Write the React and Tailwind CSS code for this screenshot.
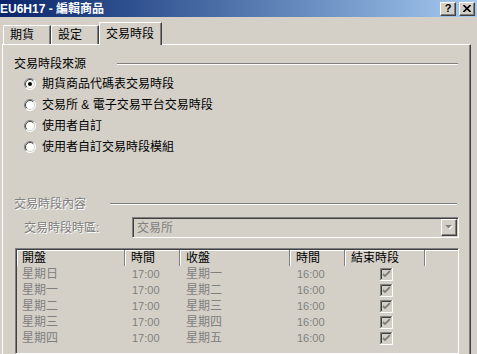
import React from 'react';

const raised =
  'border border-t-white border-l-white border-r-[#404040] border-b-[#404040] shadow-[inset_-1px_-1px_0_#808080]';
const sunken =
  'border border-t-[#808080] border-l-[#808080] border-r-white border-b-white shadow-[inset_1px_1px_0_#404040,inset_-1px_-1px_0_#d4d0c8]';
const disabledText = 'text-[#808080] [text-shadow:1px_1px_0_#ffffff]';

const sources = [
  '期貨商品代碼表交易時段',
  '交易所 & 電子交易平台交易時段',
  '使用者自訂',
  '使用者自訂交易時段模組',
];

const sessions = [
  { open: '星期日', openTime: '17:00', close: '星期一', closeTime: '16:00' },
  { open: '星期一', openTime: '17:00', close: '星期二', closeTime: '16:00' },
  { open: '星期二', openTime: '17:00', close: '星期三', closeTime: '16:00' },
  { open: '星期三', openTime: '17:00', close: '星期四', closeTime: '16:00' },
  { open: '星期四', openTime: '17:00', close: '星期五', closeTime: '16:00' },
];

const Radio = ({ checked }) => (
  <svg width="12" height="12" viewBox="0 0 12 12" className="shrink-0">
    <circle cx="6" cy="6" r="5.5" fill="#ffffff" />
    <path d="M2.1 9.9 A5.5 5.5 0 0 1 9.9 2.1" stroke="#808080" fill="none" />
    <path d="M2.1 9.9 A5.5 5.5 0 0 0 9.9 2.1" stroke="#ffffff" fill="none" />
    <path d="M2.8 9.2 A4.5 4.5 0 0 1 9.2 2.8" stroke="#404040" fill="none" />
    <path d="M2.8 9.2 A4.5 4.5 0 0 0 9.2 2.8" stroke="#d4d0c8" fill="none" />
    {checked && <circle cx="6" cy="6" r="2" fill="#000000" />}
  </svg>
);

const Checkbox = () => (
  <svg width="13" height="13" viewBox="0 0 13 13">
    <rect x="0" y="0" width="13" height="13" fill="#d4d0c8" />
    <path d="M0.5 12 V0.5 H12" stroke="#808080" fill="none" />
    <path d="M1.5 11 V1.5 H11" stroke="#404040" fill="none" />
    <path d="M0 12.5 H12.5 V0" stroke="#ffffff" fill="none" />
    <path d="M3 6 L5 8 L10 3" stroke="#808080" strokeWidth="1.8" fill="none" />
  </svg>
);

const GroupHeader = ({ label, labelWidth, disabled, rightGap }) => (
  <div className={`flex items-center h-[12px] pl-[11px] ${rightGap}`}>
    <span className={`shrink-0 ${labelWidth} ${disabled ? disabledText : ''}`}>{label}</span>
    <div className="flex-1 h-[2px] border-t border-t-[#808080] border-b border-b-white" />
  </div>
);

const TitleBar = () => (
  <div className="h-[17px] shrink-0 flex items-center bg-gradient-to-r from-[#0a246a] to-[#a6caf0]">
    <span className="text-white font-bold text-[12px] whitespace-nowrap">
      EU6H17 - 編輯商品
    </span>
    <div className="ml-auto flex gap-[3px] mr-[2px]">
      <div className={`w-[16px] h-[14px] bg-[#d4d0c8] flex items-center justify-center ${raised}`}>
        <span className="font-bold text-[11px] leading-[11px]">?</span>
      </div>
      <div className={`w-[16px] h-[14px] bg-[#d4d0c8] flex items-center justify-center ${raised}`}>
        <svg width="8" height="7" viewBox="0 0 8 7">
          <path d="M0.5 0 L7.5 7 M7.5 0 L0.5 7" stroke="#000" strokeWidth="1.6" />
        </svg>
      </div>
    </div>
  </div>
);

const Tabs = () => (
  <div className="flex items-end h-[22px] mt-[5px] pl-[3px] shrink-0">
    <div className="w-[48px] h-[19px] flex items-center pl-[6px] rounded-tl-[2px] border-t border-l border-t-white border-l-white border-r border-r-[#404040] shadow-[inset_-1px_0_0_#808080]">
      期貨
    </div>
    <div className="w-[48px] h-[19px] flex items-center pl-[6px] rounded-tl-[2px] border-t border-l border-t-white border-l-white border-r border-r-[#404040] shadow-[inset_-1px_0_0_#808080]">
      設定
    </div>
    <div className="relative z-10 -mb-px w-[63px] h-[23px] flex items-center pl-[6px] pb-[1px] bg-[#d4d0c8] rounded-tl-[2px] border-t border-l border-t-white border-l-white border-r border-r-[#404040] shadow-[inset_-1px_0_0_#808080]">
      交易時段
    </div>
  </div>
);

const SessionTable = () => (
  <div className={`flex-1 mt-[10px] ml-[12px] mr-[11px] flex flex-col ${sunken}`}>
    <div className="flex h-[16px] mt-[1px] ml-[1px] shrink-0">
      <div className="w-[108px] pl-[5px] flex items-center border-r border-r-[#808080] shadow-[inset_1px_1px_0_#ffffff]">開盤</div>
      <div className="w-[55px] pl-[6px] flex items-center border-r border-r-[#808080] shadow-[inset_1px_1px_0_#ffffff]">時間</div>
      <div className="w-[110px] pl-[6px] flex items-center border-r border-r-[#808080] shadow-[inset_1px_1px_0_#ffffff]">收盤</div>
      <div className="w-[55px] pl-[6px] flex items-center border-r border-r-[#808080] shadow-[inset_1px_1px_0_#ffffff]">時間</div>
      <div className="w-[80px] pl-[6px] flex items-center border-r border-r-[#808080] shadow-[inset_1px_1px_0_#ffffff]">結束時段</div>
      <div className="flex-1 shadow-[inset_1px_1px_0_#ffffff]" />
    </div>
    {sessions.map((s) => (
      <div key={s.open} className="flex h-[16px] ml-[1px] items-center text-[#808080] shrink-0">
        <div className="w-[108px] pl-[5px]">{s.open}</div>
        <div className="w-[55px] pl-[7px] text-[11px]">{s.openTime}</div>
        <div className="w-[110px] pl-[6px]">{s.close}</div>
        <div className="w-[55px] pl-[7px] text-[11px]">{s.closeTime}</div>
        <div className="w-[80px] flex justify-center pl-[2px]">
          <Checkbox />
        </div>
      </div>
    ))}
  </div>
);

export default function App() {
  return (
    <div className="w-[477px] h-[354px] overflow-hidden bg-[#d4d0c8] flex flex-col font-['Liberation_Sans','Noto_Sans_CJK_TC',sans-serif] text-[12px] leading-[12px] text-black">
      <TitleBar />
      <Tabs />
      <div className="flex-1 ml-[2px] w-[469px] flex flex-col border-t border-l border-t-white border-l-white border-r border-r-[#404040] shadow-[inset_-1px_0_0_#808080]">
        <div className="mt-[13px]">
          <GroupHeader label="交易時段來源" labelWidth="w-[103px]" rightGap="mr-[12px]" />
        </div>
        <div className="mt-[3px] flex flex-col">
          {sources.map((label, i) => (
            <div key={label} className="h-[21px] flex items-center pl-[21px] gap-[6px]">
              <Radio checked={i === 0} />
              <span>{label}</span>
            </div>
          ))}
        </div>
        <div className="mt-[41px]">
          <GroupHeader label="交易時段內容" labelWidth="w-[96px]" disabled rightGap="mr-[13px]" />
        </div>
        <div className="mt-[7px] h-[21px] flex items-center pl-[21px] mr-[11px]">
          <span className={`w-[108px] shrink-0 ${disabledText}`}>交易時段時區:</span>
          <div className={`flex-1 h-[21px] flex items-center ${sunken}`}>
            <span className="pl-[4px] text-[#808080]">交易所</span>
            <div className={`ml-auto mr-[1px] w-[16px] h-[17px] flex items-center justify-center bg-[#d4d0c8] ${raised}`}>
              <svg width="8" height="5" viewBox="0 0 8 5">
                <polygon points="1,1 8,1 4.5,4.5" fill="#ffffff" />
                <polygon points="0,0 7,0 3.5,3.5" fill="#808080" />
              </svg>
            </div>
          </div>
        </div>
        <SessionTable />
      </div>
    </div>
  );
}
